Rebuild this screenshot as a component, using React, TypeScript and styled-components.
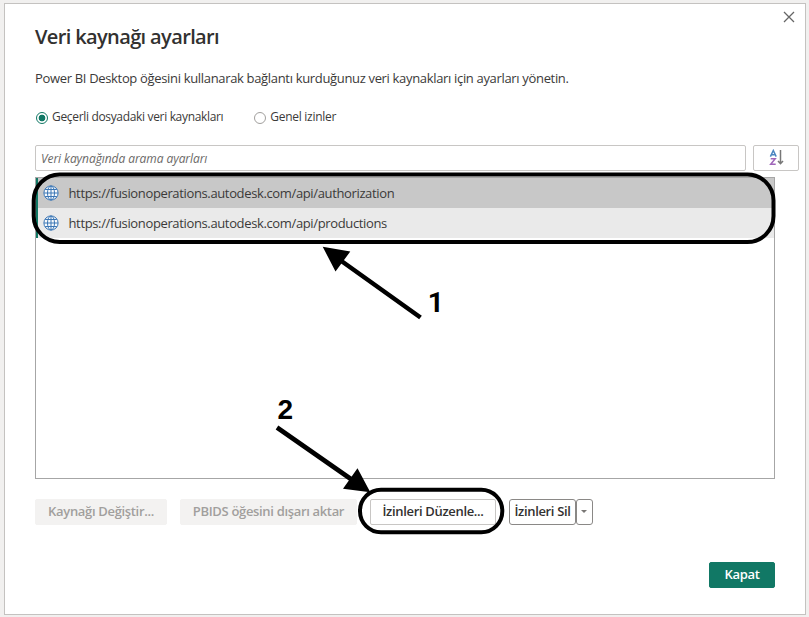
import React, { useState } from "react";
import styled, { createGlobalStyle, css } from "styled-components";

const GlobalStyle = createGlobalStyle`
  * { box-sizing: border-box; }
  html, body { margin: 0; background: #f1f0ef; }
  body, button, input {
    font-family: "Open Sans", "Noto Sans", sans-serif;
    font-size: 13px;
    color: #3b3a39;
  }
  body { overflow: hidden; }
`;

const Page = styled.div`
  width: 809px;
  height: 617px;
  padding: 3px 3px 2px 4px;
  position: relative;
`;

const Dialog = styled.main`
  height: 612px;
  border: 1px solid #c4c2c0;
  background: #fff;
  padding: 0 30px;
  display: flex;
  flex-direction: column;
  align-items: flex-start;
`;

const Label = styled.span<{ $spacing?: number }>`
  white-space: nowrap;
  letter-spacing: ${(p) => p.$spacing ?? -0.33}px;
`;

const TitleBar = styled.header`
  width: 768px;
  height: 60px;
  padding-top: 19px;
  display: flex;
  justify-content: space-between;
`;

const Title = styled.h1`
  margin: 0;
  font-size: 20px;
  font-weight: 600;
  line-height: 28px;
  color: #323130;
`;

const CloseButton = styled.button`
  width: 12px;
  height: 12px;
  margin: -12px 8px 0 0;
  padding: 0;
  border: 0;
  background: none;
  svg { display: block; }
`;

const Description = styled.p`
  margin: 4px 0 0;
  height: 20px;
  line-height: 20px;
`;

const RadioGroup = styled.div`
  display: flex;
  gap: 30px;
  margin-top: 19px;
  height: 20px;
`;

const RadioOption = styled.label`
  display: flex;
  align-items: center;
  gap: 4px;
  line-height: 20px;
  font-size: 12px;
`;

const RadioMark = styled.span<{ $on: boolean }>`
  width: 12px;
  height: 12px;
  margin: 2px 0 0 1px;
  border-radius: 50%;
  border: 1px solid ${(p) => (p.$on ? "#117865" : "#a19f9d")};
  background: ${(p) => (p.$on ? "radial-gradient(circle, #117865 3px, #fff 3.7px)" : "#fff")};
`;

const SearchRow = styled.div`
  display: flex;
  gap: 7px;
  margin-top: 18px;
`;

const box = css`
  height: 26px;
  border: 1px solid #c8c6c4;
  border-radius: 2px;
  background: #fff;
`;

const SearchBox = styled.div`
  ${box}
  width: 711px;
  padding: 0 5px;
  line-height: 25px;
  font-size: 12px;
  font-style: italic;
  color: #6b6967;
`;

const SortButton = styled.button`
  ${box}
  width: 46px;
  padding: 0;
  display: flex;
  align-items: center;
  justify-content: center;
`;

const SourceList = styled.div`
  width: 740px;
  height: 302px;
  margin-top: 6px;
  border: 1px solid #a6a6a6;
`;

const SourceRow = styled.div<{ $selected: boolean }>`
  height: 30px;
  display: flex;
  align-items: center;
  gap: 9.5px;
  padding-left: 5px;
  border-left: 2px solid #117865;
  background: ${(p) => (p.$selected ? "#c8c8c8" : "#eaeaea")};
  svg { flex: none; margin-top: -1px; }
`;

const Actions = styled.div`
  display: flex;
  gap: 13px;
  margin-top: 20px;
`;

const Button = styled.button<{ $width: number; $kind?: "disabled" | "primary" | "outline" }>`
  width: ${(p) => p.$width}px;
  height: 26px;
  padding: 0 0 2px;
  font-size: 13px;
  font-weight: 600;
  line-height: 22px;
  border-radius: 2px;
  border: 1px solid #c8c6c4;
  background: #fff;
  color: #323130;
  ${(p) => p.$kind === "disabled" && css`background: #f3f2f1; border-color: #f3f2f1; color: #a19f9d;`}
  ${(p) => p.$kind === "primary" && css`background: #117865; border-color: #117865; color: #fff;`}
  ${(p) => p.$kind === "outline" && css`border-color: #8a8886; border-radius: 3px;`}
`;

const SplitButton = styled.div`
  display: flex;
`;

const Chevron = styled.span`
  display: block;
  width: 0;
  margin: 1px 0 0 4px;
  border: 3px solid transparent;
  border-top-color: #797775;
  border-bottom-width: 0;
`;

const Footer = styled.footer`
  width: 740px;
  margin-top: 37px;
  display: flex;
  justify-content: flex-end;
`;

const Annotations = styled.svg`
  position: absolute;
  inset: 0;
  pointer-events: none;
`;

const Step = styled.text<{ $font: string }>`
  font: bold 28px ${(p) => p.$font}, sans-serif;
`;

const Globe = () => (
  <svg width="16" height="16" viewBox="0 0 16 16" fill="none" stroke="#3b76b5" strokeWidth="1">
    <circle cx="8" cy="8" r="7.1" fill="#f7fafd" />
    <ellipse cx="8" cy="8" rx="3.5" ry="7" />
    <path d="M8 1V15M1 8H15M2.2 4.5H13.8M2.2 11.5H13.8" />
  </svg>
);

const sources = [
  { url: "https://fusionoperations.autodesk.com/api/authorization", selected: true },
  { url: "https://fusionoperations.autodesk.com/api/productions", selected: false },
];

export default function App() {
  const [scope, setScope] = useState("file");
  return (
    <Page>
      <GlobalStyle />
      <Dialog>
        <TitleBar>
          <Title><Label $spacing={-0.63}>Veri kaynağı ayarları</Label></Title>
          <CloseButton aria-label="Kapat">
            <svg width="12" height="12" stroke="#666" strokeWidth="1.3">
              <path d="M1 1L11 11M11 1L1 11" />
            </svg>
          </CloseButton>
        </TitleBar>
        <Description>
          <Label>Power BI Desktop öğesini kullanarak bağlantı kurduğunuz veri kaynakları için ayarları yönetin.</Label>
        </Description>
        <RadioGroup>
          <RadioOption onClick={() => setScope("file")}>
            <RadioMark $on={scope === "file"} />
            <Label>Geçerli dosyadaki veri kaynakları</Label>
          </RadioOption>
          <RadioOption onClick={() => setScope("global")}>
            <RadioMark $on={scope === "global"} />
            <Label $spacing={-0.28}>Genel izinler</Label>
          </RadioOption>
        </RadioGroup>
        <SearchRow>
          <SearchBox><Label $spacing={-0.07}>Veri kaynağında arama ayarları</Label></SearchBox>
          <SortButton aria-label="Sırala">
            <svg width="16" height="18" fill="none" strokeWidth="1.5">
              <path d="M2.4 7.6L5.3 1.5L8.2 7.6M3.4 5.8H7.2" stroke="#4a86c0" />
              <path d="M2.7 9.7H7.2L2.7 15.2H7.7" stroke="#a066ba" />
              <path d="M12.5 1V14.5M10 12L12.5 14.7L15 12" stroke="#777" />
            </svg>
          </SortButton>
        </SearchRow>
        <SourceList>
          {sources.map((s) => (
            <SourceRow key={s.url} $selected={s.selected}>
              <Globe />
              <Label $spacing={-0.36}>{s.url}</Label>
            </SourceRow>
          ))}
        </SourceList>
        <Actions>
          <Button $width={132} $kind="disabled"><Label>Kaynağı Değiştir...</Label></Button>
          <Button $width={177} $kind="disabled"><Label>PBIDS öğesini dışarı aktar</Label></Button>
          <Button $width={126}><Label>İzinleri Düzenle...</Label></Button>
          <SplitButton>
            <Button $width={67} $kind="outline"><Label>İzinleri Sil</Label></Button>
            <Button $width={17} $kind="outline" aria-label="Diğer"><Chevron /></Button>
          </SplitButton>
        </Actions>
        <Footer>
          <Button $width={66} $kind="primary"><Label>Kapat</Label></Button>
        </Footer>
      </Dialog>
      <Annotations width="809" height="617">
        <g fill="none" stroke="#000" strokeWidth="4">
          <rect x="33.7" y="174.5" width="739.8" height="67.5" rx="26" />
          <rect x="360" y="489.7" width="142.3" height="42.5" rx="21" />
          <path d="M420.5 317.5L340 260M277 427.5L353 480.5" strokeWidth="4.6" />
        </g>
        <path d="M322.7 246.7L350.3 251.5L335.5 271.5ZM370.3 492.3L343 488.7L357.5 468.3Z" />
        <Step $font="Roboto" x="427.8" y="312">1</Step>
        <Step $font='"Liberation Sans"' x="277.5" y="419">2</Step>
      </Annotations>
    </Page>
  );
}
